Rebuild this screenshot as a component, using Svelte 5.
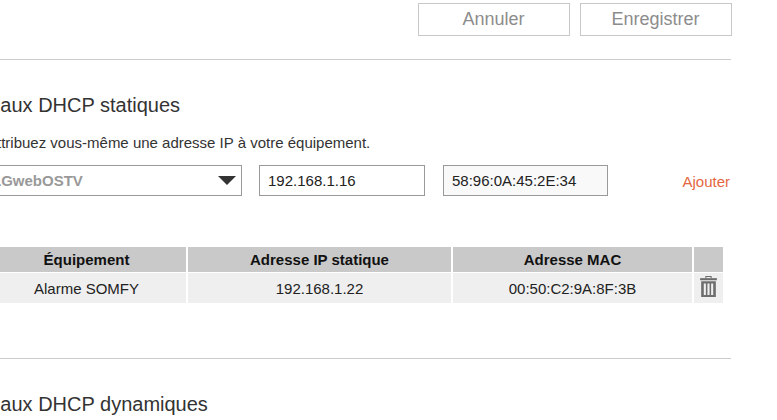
<script>
  const rows = [{ name: 'Alarme SOMFY', ip: '192.168.1.22', mac: '00:50:C2:9A:8F:3B' }];
</script>

<div class="page">
  <div class="actions">
    <button type="button">Annuler</button>
    <button type="button">Enregistrer</button>
  </div>
  <hr class="first" />

  <h2 class="static">Baux DHCP statiques</h2>
  <p>Attribuez vous-même une adresse IP à votre équipement.</p>

  <div class="form">
    <div class="select">
      <span>LGwebOSTV</span>
      <svg width="18" height="9" viewBox="0 0 18 9"><path d="M0 0H18L9 9Z" fill="#333" /></svg>
    </div>
    <div class="input">192.168.1.16</div>
    <div class="input mac">58:96:0A:45:2E:34</div>
    <a href="#add">Ajouter</a>
  </div>

  <div class="table">
    <div class="th">Équipement</div>
    <div class="th">Adresse IP statique</div>
    <div class="th">Adresse MAC</div>
    <div class="th"></div>
    {#each rows as row}
      <div class="td">{row.name}</div>
      <div class="td">{row.ip}</div>
      <div class="td">{row.mac}</div>
      <div class="td">
        <svg class="trash" width="17" height="22" viewBox="0 0 16 21" fill="#6e6e6e">
          <path d="M5 3V1H11V3H10V2H6V3Z" />
          <rect x="0" y="3" width="16" height="2" />
          <path d="M1 6H15V21H1ZM3.5 8V19H5.5V8ZM7 8V19H9V8ZM10.5 8V19H12.5V8Z" fill-rule="evenodd" />
        </svg>
      </div>
    {/each}
  </div>

  <hr class="second" />
  <h2 class="dynamic">Baux DHCP dynamiques</h2>
</div>

<style>
  :global(body) {
    margin: 0;
    background: #fff;
    overflow: hidden;
  }
  .page {
    width: 744px;
    height: 420px;
    margin-left: -13px;
    font-family: "Liberation Sans", Arial, sans-serif;
    color: #333;
  }
  .actions {
    display: flex;
    justify-content: flex-end;
    gap: 10px;
    margin-right: -1px;
    padding-top: 3px;
  }
  button {
    width: 152px;
    height: 33px;
    box-sizing: border-box;
    padding: 0 1px 0 0;
    border: 1px solid #c8c8c8;
    background: #fff;
    color: #8c8c8c;
    font: 18px "Liberation Sans", Arial, sans-serif;
  }
  hr {
    margin: 0;
    border: 0;
    border-top: 1px solid #ccc;
  }
  hr.first {
    margin-top: 23px;
  }
  h2 {
    margin: 0;
    font-size: 20px;
    font-weight: 400;
    line-height: 22px;
    color: #333;
  }
  h2.static {
    margin-top: 34px;
  }
  h2.dynamic {
    margin-top: 34px;
  }
  p {
    margin: 18px 0 0;
    font-size: 15px;
    line-height: 18px;
    color: #333;
  }
  .form {
    display: grid;
    grid-template-columns: 255px 166px 165px 1fr;
    column-gap: 17px;
    align-items: center;
    margin-top: 13px;
  }
  .select, .input {
    height: 31px;
    box-sizing: border-box;
    border: 1px solid #999;
    font-size: 15px;
    line-height: 29px;
    background: #fff;
    color: #222;
  }
  .select {
    display: flex;
    align-items: center;
    justify-content: space-between;
    padding: 0 5px 0 0;
    color: #999;
    font-weight: 700;
  }
  .select span {
    padding-left: 4px;
  }
  .input {
    padding-left: 8px;
  }
  .mac {
    background: #f9f9f9;
    margin-left: 1px;
    width: 165px;
  }
  a {
    justify-self: end;
    font-size: 15px;
    color: #e4673f;
    text-decoration: none;
    margin-top: 2px;
    margin-right: 1px;
  }
  .table {
    display: grid;
    grid-template-columns: 199px 263px 239px 29px;
    grid-template-rows: 25px 30px;
    column-gap: 2px;
    row-gap: 1px;
    margin-top: 51px;
    font-size: 15px;
    color: #222;
    text-align: center;
  }
  .th, .td {
    display: flex;
    align-items: center;
    justify-content: center;
  }
  .th {
    background: #c9c9c9;
    font-weight: 700;
    color: #111;
  }
  .td {
    background: #efefef;
  }
  .trash {
    margin-bottom: 4px;
  }
  hr.second {
    margin-top: 55px;
  }
</style>
